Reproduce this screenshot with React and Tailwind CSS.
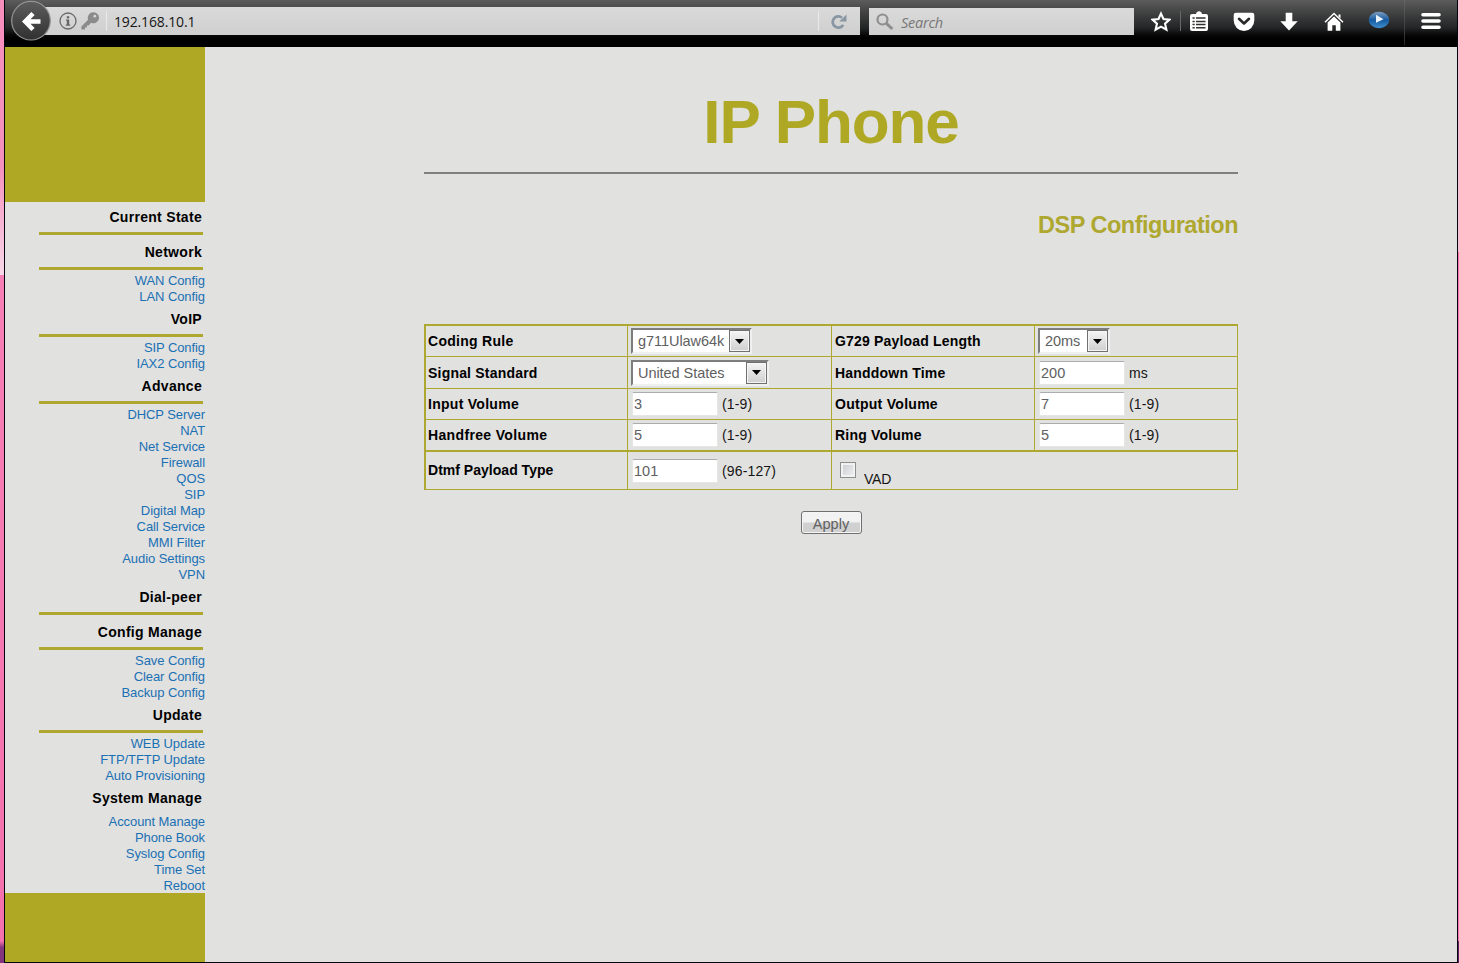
import React from "react";

const SECTIONS = [
  { title: "Current State", links: [], rule: true },
  { title: "Network", links: ["WAN Config", "LAN Config"], rule: true },
  { title: "VoIP", links: ["SIP Config", "IAX2 Config"], rule: true },
  {
    title: "Advance",
    links: ["DHCP Server", "NAT", "Net Service", "Firewall", "QOS", "SIP", "Digital Map", "Call Service", "MMI Filter", "Audio Settings", "VPN"],
    rule: true,
  },
  { title: "Dial-peer", links: [], rule: true },
  { title: "Config Manage", links: ["Save Config", "Clear Config", "Backup Config"], rule: true },
  { title: "Update", links: ["WEB Update", "FTP/TFTP Update", "Auto Provisioning"], rule: true },
  { title: "System Manage", links: ["Account Manage", "Phone Book", "Syslog Config", "Time Set", "Reboot"], rule: false },
];

function Toolbar() {
  return (
    <header className="flex h-[47px] shrink-0 items-start bg-linear-to-b from-[#5c5c5c] via-[#232425] via-60% to-black to-90% font-['Open_Sans',sans-serif]">
      <div className="relative z-10 ml-[6px] h-[41px] w-[40px] shrink-0">
        <svg className="h-[41px] w-[40px]" viewBox="0 0 40 41">
          <defs>
            <linearGradient id="back" x1="0" y1="0" x2="0" y2="1">
              <stop offset="0" stopColor="#5d5d5d" />
              <stop offset="1" stopColor="#303030" />
            </linearGradient>
          </defs>
          <circle cx="20" cy="20.700" r="19.300" fill="url(#back)" stroke="#949494" strokeWidth="1.200" />
          <path d="M22 13.500L14.200 21.500L22 29.500M15 21.500H29.500" fill="none" stroke="#fff" strokeWidth="4.600" strokeLinejoin="miter" />
        </svg>
      </div>
      <div className="-ml-[7px] mt-[7px] flex h-[28px] w-[816px] shrink-0 items-center bg-linear-to-b from-[#dadada] to-[#cfcfcf]">
        <svg className="ml-[15px] h-[18px] w-[18px]" viewBox="0 0 18 18">
          <circle cx="9" cy="9" r="8" fill="none" stroke="#6a6a6a" strokeWidth="1.300" />
          <rect x="7.800" y="4.200" width="2.400" height="2.200" fill="#666" />
          <path d="M7 7.600h3.200v5h1v1.200H6.800v-1.200h1v-3.800H7z" fill="#666" />
        </svg>
        <svg className="ml-[4px] h-[18px] w-[18px]" viewBox="0 0 18 18">
          <path d="M12.300.3a5.500 5.500 0 0 0-5.200 7.400L.4 14.400v3h3.500v-2h2v-2h1.700l2.400-2.700A5.500 5.500 0 1 0 12.300.3z" fill="#8b8b8b" />
          <circle cx="13.800" cy="4.200" r="1.400" fill="#d6d6d6" />
        </svg>
        <span className="ml-[7px] h-[20px] w-px bg-[#e9e9e9]" />
        <span className="ml-[7px] mt-[2px] text-[14px] leading-[20px] tracking-[-0.15px] text-[#151515]">192.168.10.1</span>
        <span className="ml-auto h-[20px] w-px bg-[#e9e9e9]" />
        <svg className="ml-[12px] mr-[13px] mt-[2px] h-[16px] w-[16px]" viewBox="0 0 16 16">
          <path d="M12.200 10.800A5.600 5.600 0 1 1 11 3.800" fill="none" stroke="#8796a2" strokeWidth="2.700" />
          <path d="M15.500.6v7H8.300z" fill="#8796a2" />
        </svg>
      </div>
      <div className="ml-[9px] mt-[8px] flex h-[27px] w-[265px] shrink-0 items-center bg-linear-to-b from-[#dadada] to-[#cfcfcf]">
        <svg className="ml-[7px] h-[18px] w-[18px]" viewBox="0 0 18 18">
          <circle cx="6.500" cy="6.500" r="5" fill="none" stroke="#8e8e8e" strokeWidth="2.200" />
          <path d="M10.300 10.300L16.300 16" stroke="#8e8e8e" strokeWidth="3" />
        </svg>
        <span className="ml-[7px] mt-[2px] text-[14.500px] leading-[20px] tracking-[-0.25px] text-[#777] italic">Search</span>
      </div>
      <svg className="ml-[17px] mt-[11px] h-[22px] w-[20px] shrink-0" viewBox="0 0 20 22">
        <path d="M10 2.600l2.500 5.400 6 .6-4.500 4 1.400 6L10 15.600 4.600 18.600 6 12.600 1.500 8.600l6-.6z" fill="none" stroke="#fff" strokeWidth="2.100" />
      </svg>
      <span className="ml-[9px] mt-[11px] h-[20px] w-px shrink-0 bg-[#686868]" />
      <svg className="ml-[8px] mt-[11px] h-[21px] w-[20px] shrink-0" viewBox="0 0 20 21">
        <path d="M3 3h4q0-2 2.500-2.700h1Q13 1 13 3h4q2 0 2 2v13q0 2-2 2H3q-2 0-2-2V5q0-2 2-2z" fill="#fff" />
        <path d="M3.500 7h2.200M7 7h9.500M3.500 10.500h2.200M7 10.500h9.500M3.500 13.500h2.200M7 13.500h9.500M3.500 16.800h2.200M7 16.800h9.500" stroke="#303030" strokeWidth="1.400" />
      </svg>
      <svg className="ml-[24px] mt-[12px] h-[20px] w-[22px] shrink-0" viewBox="0 0 22 20">
        <path d="M3 .8h16q2.300 0 2.300 2.300v5.500a10.300 10.300 0 0 1-20.600 0V3.100Q.7.800 3 .8z" fill="#fff" />
        <path d="M6 6.800l5 4.700 5-4.700" fill="none" stroke="#292929" strokeWidth="2.600" strokeLinecap="round" strokeLinejoin="round" />
      </svg>
      <svg className="ml-[25px] mt-[12px] h-[20px] w-[18px] shrink-0" viewBox="0 0 18 20">
        <path d="M5.700.8h6.600v8.400h5.400L9 18.600.3 9.200h5.400z" fill="#fff" />
      </svg>
      <svg className="ml-[26px] mt-[12px] h-[20px] w-[20px] shrink-0" viewBox="0 0 20 20">
        <path d="M1 10.300L10 1.500l9 8.800" fill="none" stroke="#fff" strokeWidth="1.500" />
        <path d="M14.500 2.500h2v4l-2-2z" fill="#fff" />
        <path d="M3.600 10.600L10 4.600l6.400 6v8.100h-4.600v-5.500H8.300v5.500H3.600z" fill="#fff" />
      </svg>
      <svg className="ml-[24px] mt-[11px] h-[18px] w-[22px] shrink-0" viewBox="0 0 22 18">
        <defs>
          <linearGradient id="globe" x1="0" y1="0" x2="0" y2="1">
            <stop offset="0" stopColor="#7d9dc0" />
            <stop offset=".5" stopColor="#155a9f" />
            <stop offset="1" stopColor="#3f90d2" />
          </linearGradient>
        </defs>
        <ellipse cx="11" cy="9" rx="10.300" ry="8.200" fill="url(#globe)" />
        <path d="M8 3.800l7.500 4.400L8 11.800z" fill="#e9f3fb" />
      </svg>
      <span className="ml-[14px] h-[45px] w-px shrink-0 bg-linear-to-b from-[#666] to-[#292929]" />
      <svg className="ml-[15px] mt-[11px] h-[20px] w-[22px] shrink-0" viewBox="0 0 22 20">
        <path d="M3 3.700h16M3 10h16M3 16.300h16" stroke="#fff" strokeWidth="3.600" strokeLinecap="round" />
      </svg>
    </header>
  );
}

function Sidebar() {
  return (
    <nav className="flex w-[200px] shrink-0 flex-col text-right">
      <div className="h-[155px] shrink-0 bg-[#afa824]" />
      <div className="pt-px">
        {SECTIONS.map((s) => (
          <section key={s.title}>
            <h3 className="h-[29px] pr-[3px] text-[14px] leading-[28px] font-bold tracking-[0.3px] text-black">{s.title}</h3>
            {s.rule && <div className="mb-[3px] ml-[34px] h-[3px] w-[164px] bg-[#aea730]" />}
            {s.links.map((l) => (
              <a key={l} className={`block h-[16px] text-[13px] tracking-[-0.08px] text-[#1a70b4] ${s.rule ? "leading-[16px]" : "leading-[18px]"}`}>{l}</a>
            ))}
          </section>
        ))}
      </div>
      <div className="flex-1 bg-[#afa824]" />
    </nav>
  );
}

function Select({ value, width }) {
  return (
    <div className={`${width} ml-px flex h-[26px] items-stretch border-2 border-t-[#7d7d7d] border-r-[#f0f0f0] border-b-[#f0f0f0] border-l-[#7d7d7d] bg-white`}>
      <span className="flex-1 pl-[5px] text-[14.500px] leading-[22px] tracking-[-0.05px] whitespace-nowrap text-[#606060]">{value}</span>
      <span className="flex w-[21px] items-center justify-center border border-[#707070] bg-linear-to-b from-[#f4f4f4] to-[#cfcfcf] shadow-[inset_0_0_0_1px_#f5f5f5]">
        <svg className="h-[5px] w-[9px]" viewBox="0 0 9 5">
          <path d="M0 0h9L4.500 5z" fill="#000" />
        </svg>
      </span>
    </div>
  );
}

function Field({ value, hint }) {
  return (
    <>
      <div className="ml-[2px] h-[24px] w-[86px] rounded-[2px] border border-[#e6e6e6] border-t-[#aaacb0] bg-white pl-px text-[14.500px] leading-[22px] text-[#606060]">{value}</div>
      <span className="ml-[4px] pt-px text-[14px] tracking-[0.15px] text-[#151515]">{hint}</span>
    </>
  );
}

const CELL = "flex items-center border-r border-[#aea730] pl-[2px]";
const LABEL = `${CELL} text-[14px] font-bold text-black`;

function ConfigTable() {
  return (
    <div className="mt-[85px] grid w-[814px] grid-cols-[202px_204px_203px_203px] grid-rows-[31px_32px_31px_32px_38px] border-t-2 border-l-2 border-[#aea730]">
      <div className={`${LABEL} border-b tracking-[0.28px]`}>Coding Rule</div>
      <div className={`${CELL} border-b`}><Select value="g711Ulaw64k" width="w-[121px]" /></div>
      <div className={`${LABEL} border-b pl-[3px] tracking-[0.18px]`}>G729 Payload Length</div>
      <div className={`${CELL} border-b`}><Select value="20ms" width="w-[72px]" /></div>

      <div className={`${LABEL} border-b pt-px tracking-[0.2px]`}>Signal Standard</div>
      <div className={`${CELL} border-b`}><Select value="United States" width="w-[138px]" /></div>
      <div className={`${LABEL} border-b pt-px pl-[3px] tracking-[0.2px]`}>Handdown Time</div>
      <div className={`${CELL} border-b`}><Field value="200" hint="ms" /></div>

      <div className={`${LABEL} border-b tracking-[0.28px]`}>Input Volume</div>
      <div className={`${CELL} border-b`}><Field value="3" hint="(1-9)" /></div>
      <div className={`${LABEL} border-b pl-[3px] tracking-[0.28px]`}>Output Volume</div>
      <div className={`${CELL} border-b`}><Field value="7" hint="(1-9)" /></div>

      <div className={`${LABEL} border-b-2 tracking-[0.35px]`}>Handfree Volume</div>
      <div className={`${CELL} border-b-2`}><Field value="5" hint="(1-9)" /></div>
      <div className={`${LABEL} border-b-2 pl-[3px] tracking-[0.2px]`}>Ring Volume</div>
      <div className={`${CELL} border-b-2`}><Field value="5" hint="(1-9)" /></div>

      <div className={`${LABEL} border-b tracking-[0.02px]`}>Dtmf Payload Type</div>
      <div className={`${CELL} border-b`}><Field value="101" hint="(96-127)" /></div>
      <div className={`${CELL} col-span-2 border-b`}>
        <span className="mb-[2px] ml-[6px] h-[16px] w-[16px] border border-[#8e8f8f] bg-linear-to-br from-[#c9cbd0] to-[#f2f2f2] shadow-[inset_0_0_0_2px_#f2f2f2]" />
        <span className="mt-[17px] ml-[8px] text-[14px] tracking-[-0.2px] text-[#151515]">VAD</span>
      </div>
    </div>
  );
}

export default function App() {
  return (
    <div className="flex h-[963px] w-[1459px] overflow-hidden font-['Liberation_Sans',Arial,sans-serif]">
      <div className="flex w-[4px] shrink-0 flex-col">
        <div className="h-[275px] bg-linear-to-b from-[#f78fbd] via-[#f48fbd] via-60% to-[#f6d7e8]" />
        <div className="flex-1 bg-linear-to-b from-[#f77fb6] to-[#f571ad]" />
        <div className="h-[22px] bg-linear-to-b from-[#f571ad] to-[#84357d] to-30%" />
      </div>
      <div className="flex w-[1454px] shrink-0 flex-col border-r border-b border-l border-[#05050f] bg-[#e1e1df]">
        <Toolbar />
        <div className="flex flex-1">
          <Sidebar />
          <main className="ml-[219px] flex w-[814px] flex-col">
            <h1 className="mt-[40px] h-[70px] text-center text-[62px] leading-[70px] font-bold tracking-[-1.100px] text-[#afa824]">IP Phone</h1>
            <div className="mt-[15px] h-[2px] bg-[#80807e]" />
            <h2 className="mt-[38px] h-[27px] text-right text-[23.500px] leading-[26px] font-bold tracking-[-0.500px] text-[#aea730]">DSP Configuration</h2>
            <ConfigTable />
            <button className="mt-[21px] h-[23px] w-[61px] self-center rounded-[3px] border border-[#707070] bg-linear-to-b from-[#f2f2f2] from-45% to-[#d0d0d0] to-55% pt-[2px] text-[14.500px] leading-[21px] text-[#606060] shadow-[inset_0_0_0_1px_#f5f5f5]">Apply</button>
          </main>
        </div>
      </div>
      <div className="flex w-px shrink-0 flex-col">
        <div className="h-[252px] bg-[#f6c3dc]" />
        <div className="flex-1 bg-[#f571ad]" />
        <div className="h-[22px] bg-[#60235f]" />
      </div>
    </div>
  );
}
